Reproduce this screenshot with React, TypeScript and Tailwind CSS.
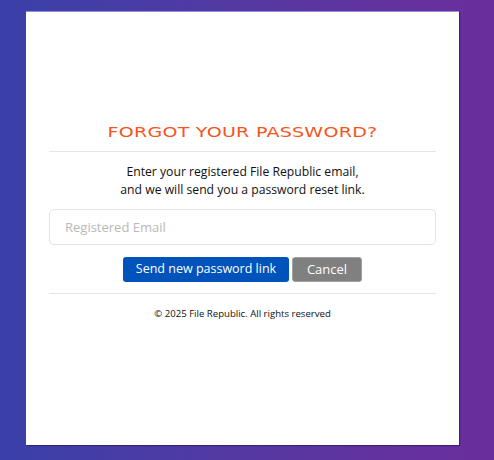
const App: React.FC = () => {
  return (
    <div className="min-h-[460px] w-full bg-gradient-to-r from-[#3940a9] to-[#6b2d9c] px-[26px] pt-[11px] pb-[15px] flex">
      <div className="w-[433px] h-[434px] bg-white border-t border-[#8f8fd8] shadow-[1px_1px_1px_rgba(40,20,100,0.6)] flex flex-col items-center px-[23px] pt-[110px]" style={{ fontFamily: '"Open Sans", sans-serif' }}>
        <div className="text-[14.3px] tracking-[0.2px] text-[#f4561c] leading-[20px]" style={{ fontFamily: '"DejaVu Sans", sans-serif', transform: "scaleX(1.33)" }}>
          FORGOT YOUR PASSWORD?
        </div>
        <div className="w-full border-t border-[#e5e5e5] mt-[9px]"></div>
        <div className="text-[12.2px] text-[#111] text-center leading-[18px] mt-[11px]">
          Enter your registered File Republic email,
          <br />
          and we will send you a password reset link.
        </div>
        <input
          className="w-full h-[36px] mt-[10px] rounded-[5px] border border-[#e3e3e3] px-[15px] text-[13px] placeholder:text-[#b9b9b9] outline-none"
          placeholder="Registered Email"
        />
        <div className="flex gap-[3px] mt-[12px]">
          <button className="h-[25px] w-[166px] rounded-[3px] bg-[#0053ba] text-white text-[12.5px]">
            Send new password link
          </button>
          <button className="h-[25px] w-[70px] rounded-[3px] bg-[#808080] text-white text-[13px] border border-[#a0a0a0]">
            Cancel
          </button>
        </div>
        <div className="w-full border-t border-[#e5e5e5] mt-[11px]"></div>
        <div className="text-[9.6px] text-[#111] mt-[13px]">
          © 2025 File Republic. All rights reserved
        </div>
      </div>
    </div>
  );
};

export default App;
